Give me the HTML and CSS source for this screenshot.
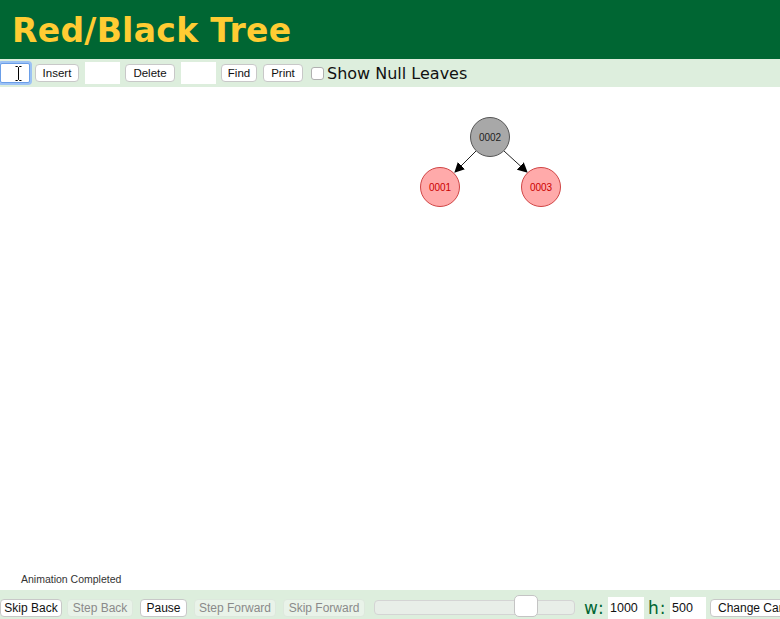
FILE: index.html
```html
<!DOCTYPE html>
<html>
<head>
<meta charset="utf-8">
<title>Red/Black Tree</title>
<link rel="stylesheet" href="styles.css">
</head>
<body>
<header class="header">
  <h1 class="title">Red/Black Tree</h1>
</header>
<div class="toolbar">
  <span class="focus-wrap">
    <input class="field field-focus" type="text">
    <svg class="ibeam" width="7" height="15" viewBox="0 0 7 15">
      <path d="M0.5,0.5 H2.5 L3.5,1.5 L4.5,0.5 H6.5 M3.5,1.5 V13.5 M0.5,14.5 H2.5 L3.5,13.5 L4.5,14.5 H6.5" fill="none" stroke="#000" stroke-width="1"/>
    </svg>
  </span>
  <button class="btn w-insert">Insert</button>
  <input class="field" type="text">
  <button class="btn w-delete">Delete</button>
  <input class="field" type="text">
  <button class="btn w-find">Find</button>
  <button class="btn w-print">Print</button>
  <label class="check"><span class="box"></span>Show Null Leaves</label>
</div>
<main class="canvas">
  <svg class="tree" width="780" height="503" viewBox="0 87 780 503">
    <defs>
      <marker id="arr" markerWidth="10" markerHeight="10" refX="9" refY="5" orient="auto" markerUnits="userSpaceOnUse">
        <path d="M0,0 L10,5 L0,10 Z" fill="#000"/>
      </marker>
    </defs>
    <line x1="476" y1="151" x2="455" y2="172" stroke="#222" stroke-width="1" marker-end="url(#arr)"/>
    <line x1="504" y1="151" x2="527" y2="172" stroke="#222" stroke-width="1" marker-end="url(#arr)"/>
    <circle cx="490" cy="137" r="19.5" fill="#a8a8a8" stroke="#555" stroke-width="1"/>
    <text x="490" y="141" class="nt nt-black">0002</text>
    <circle cx="440" cy="187" r="19.5" fill="#ffaaaa" stroke="#d04444" stroke-width="1"/>
    <text x="440" y="191" class="nt nt-red">0001</text>
    <circle cx="541" cy="187" r="19.5" fill="#ffaaaa" stroke="#d04444" stroke-width="1"/>
    <text x="541" y="191" class="nt nt-red">0003</text>
  </svg>
  <div class="status">Animation Completed</div>
</main>
<footer class="controls">
  <button class="btn btn-first w-skipback">Skip Back</button>
  <button class="btn btn-off w-stepback">Step Back</button>
  <button class="btn w-pause">Pause</button>
  <button class="btn btn-off w-stepfwd">Step Forward</button>
  <button class="btn btn-off w-skipfwd">Skip Forward</button>
  <div class="slider"><span class="thumb"></span></div>
  <span class="dim w-dimw">w:</span>
  <input class="field field-num" type="text" value="1000">
  <span class="dim w-dimh">h:</span>
  <input class="field field-num" type="text" value="500">
  <button class="btn btn-wide">Change Canvas Size</button>
</footer>
</body>
</html>
```
FILE: styles.css
```css
html, body {
  margin: 0;
  padding: 0;
  width: 780px;
  height: 619px;
  overflow: hidden;
  background: #fff;
  font-family: "Liberation Sans", Arial, sans-serif;
}
.header {
  height: 59px;
  background: #006633;
  display: flex;
  align-items: center;
}
.title {
  margin: 0 0 0 12px;
  font-family: "DejaVu Sans", Verdana, sans-serif;
  font-weight: bold;
  font-size: 33px;
  letter-spacing: 0.3px;
  color: #ffcc33;
  line-height: 1;
  position: relative;
  top: 1px;
}
.toolbar {
  height: 28px;
  background: #ddeedd;
  display: flex;
  align-items: center;
  white-space: nowrap;
}
.focus-wrap {
  position: relative;
  display: flex;
  flex: none;
  margin-right: 5px;
}
.ibeam {
  position: absolute;
  left: 15px;
  top: 3px;
}
.field {
  box-sizing: border-box;
  height: 22px;
  width: 35px;
  border: none;
  background: #fff;
  margin: 0 5px 0 0;
  padding: 0 3px;
  font-family: "Liberation Sans", Arial, sans-serif;
  font-size: 13px;
  outline: none;
  flex: none;
}
.field-focus {
  width: 30px;
  margin: 0;
  border: 1px solid #6a9ee8;
  box-shadow: 0 0 0 2px #9cc2f4;
  border-radius: 2px;
  height: 20px;
}
.btn {
  box-sizing: border-box;
  height: 18px;
  padding: 0;
  margin: 0 6px 0 0;
  border: 1px solid #c8c8c8;
  border-radius: 4px;
  background: #fff;
  font-family: "Liberation Sans", Arial, sans-serif;
  font-size: 11.5px;
  color: #111;
  line-height: 16px;
  text-align: center;
  flex: none;
}
.w-insert { width: 44px; }
.w-delete { width: 50px; }
.w-find { width: 36px; }
.w-print { width: 40px; }
.check {
  display: flex;
  align-items: center;
  font-family: "DejaVu Sans", Verdana, sans-serif;
  font-size: 16px;
  color: #111;
  margin-left: 2px;
}
.box {
  display: inline-block;
  width: 11px;
  height: 11px;
  border: 1px solid #b0b0b0;
  border-radius: 3px;
  background: #fff;
  margin-right: 3px;
}
.canvas {
  position: relative;
  height: 503px;
}
.tree {
  display: block;
}
.nt {
  font-family: "Liberation Sans", Arial, sans-serif;
  font-size: 10px;
  text-anchor: middle;
}
.nt-black { fill: #222; }
.nt-red { fill: #cc0000; }
.status {
  position: absolute;
  left: 21px;
  top: 486px;
  font-size: 10.5px;
  color: #333;
}
.controls {
  height: 29px;
  background: #ddeedd;
  display: flex;
  align-items: center;
  padding-top: 6px;
  box-sizing: border-box;
  white-space: nowrap;
  overflow: hidden;
}
.controls .btn {
  margin-right: 7px;
  font-size: 12px;
  height: 18px;
}
.controls .btn-first { margin-right: 5px; }
.w-skipback { width: 62px; }
.w-stepback { width: 66px; }
.w-pause { width: 47px; }
.w-stepfwd { width: 82px; }
.w-skipfwd { width: 82px; }
.btn-wide { padding: 0 7px; }
.btn-off {
  background: #e9f3e9;
  border-color: #dde8dd;
  color: #8a8a8a;
}
.slider {
  position: relative;
  width: 201px;
  height: 15px;
  box-sizing: border-box;
  border: 1px solid #d4d4d4;
  border-radius: 4px;
  background: #e8eee8;
  margin: 0 9px 0 2px;
  flex: none;
}
.thumb {
  position: absolute;
  left: 139px;
  top: -6px;
  width: 24px;
  height: 22px;
  box-sizing: border-box;
  background: #fff;
  border: 1px solid #c4c4c4;
  border-radius: 5px;
}
.dim {
  font-family: "DejaVu Sans", Verdana, sans-serif;
  font-size: 17px;
  color: #006633;
  margin-right: 5px;
  letter-spacing: 1px;
  flex: none;
}
.w-dimw { width: 19px; }
.w-dimh { width: 17px; }
.field-num {
  width: 36px;
  padding: 0 2px;
  font-size: 12.5px;
  color: #111;
  margin-right: 4px;
}
```
